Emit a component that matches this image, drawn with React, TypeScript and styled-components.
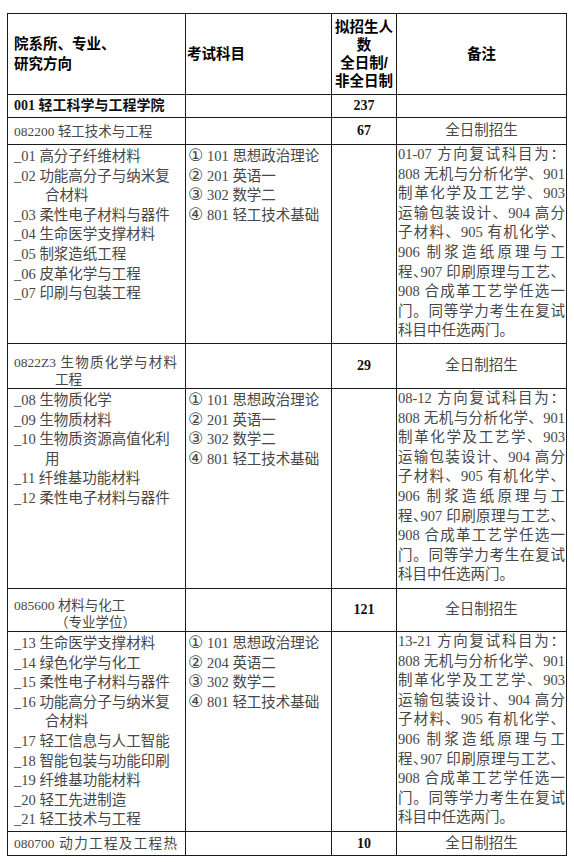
import React from 'react';
import styled, { createGlobalStyle } from 'styled-components';

const GlobalStyle = createGlobalStyle`
  html, body {
    margin: 0;
    padding: 0;
    background: #fff;
  }
  body {
    font-family: "Liberation Serif", "Noto Sans CJK SC", serif;
    color: #474747;
  }
`;

const Page = styled.div`
  padding: 13px 0 10px 7px;
`;

const Table = styled.table`
  border-collapse: collapse;
  table-layout: fixed;
  width: 559px;
`;

const Row = styled.tr<{ $h: number }>`
  height: ${p => p.$h}px;
`;

const HeadCell = styled.th<{ $align?: 'left' | 'center'; $pad?: number }>`
  border: 1px solid #1a1a1a;
  padding: 0 0 0 ${p => p.$pad ?? 0}px;
  font-family: "Liberation Sans", "Noto Sans CJK SC", sans-serif;
  font-weight: 700;
  font-size: 14.5px;
  line-height: 20px;
  color: #000;
  text-align: ${p => p.$align ?? 'center'};
  vertical-align: middle;
`;

const StackHead = styled.div`
  line-height: 18px;
`;

type Kind = 'dir' | 'subj' | 'num' | 'note';

const padLeft: Record<Kind, number> = { dir: 6, subj: 2, num: 0, note: 1 };

const Cell = styled.td<{ $kind: Kind; $top?: number }>`
  border: 1px solid #1a1a1a;
  padding: ${p => (p.$top !== undefined ? p.$top : 0)}px ${p => (p.$kind === 'note' ? 1 : 0)}px 0
    ${p => padLeft[p.$kind]}px;
  vertical-align: ${p => (p.$top !== undefined ? 'top' : 'middle')};
  text-align: ${p => (p.$kind === 'num' || p.$kind === 'note' ? 'center' : 'left')};
  font-size: 14.5px;
  line-height: 19.6px;
  overflow: hidden;
`;

const SchoolName = styled.div`
  font-weight: 700;
  font-size: 14px;
  color: #111;
`;

const Count = styled.div`
  font-weight: 700;
  font-size: 14px;
  color: #111;
`;

const CodeLine = styled.div<{ $indent?: number; $justify?: boolean }>`
  font-size: 13.5px;
  line-height: 17px;
  white-space: nowrap;
  padding-left: ${p => p.$indent ?? 0}px;
  text-align: ${p => (p.$justify ? 'justify' : 'left')};
  text-align-last: ${p => (p.$justify ? 'justify' : 'auto')};
  width: ${p => (p.$justify ? '163px' : 'auto')};
`;

const Line = styled.div<{ $indent?: number; $justify?: boolean }>`
  white-space: nowrap;
  padding-left: ${p => p.$indent ?? 0}px;
  text-align: ${p => (p.$justify ? 'justify' : 'left')};
  text-align-last: ${p => (p.$justify ? 'justify' : 'left')};
`;

const Circled = styled.span`
  display: inline-block;
  width: 15px;
  font-family: "DejaVu Sans", "Noto Sans CJK SC", sans-serif;
  font-size: 17px;
  line-height: 0;
  margin-right: 4px;
`;

const Tight = styled.span`
  letter-spacing: -0.5em;
`;

const Mode = styled.div`
  font-size: 14.5px;
`;

type Group = {
  code: string[];
  spread?: boolean;
  codeTop?: number;
  count: string;
  dirs: string[][];
  subjects: string[];
  first: string;
  h: number;
  codeH: number;
};

const groups: Group[] = [
  {
    code: ['082200 轻工技术与工程'],
    count: '67',
    codeH: 27,
    h: 199,
    dirs: [
      ['_01 高分子纤维材料'],
      ['_02 功能高分子与纳米复', '合材料'],
      ['_03 柔性电子材料与器件'],
      ['_04 生命医学支撑材料'],
      ['_05 制浆造纸工程'],
      ['_06 皮革化学与工程'],
      ['_07 印刷与包装工程'],
    ],
    subjects: ['101 思想政治理论', '201 英语一', '302 数学二', '801 轻工技术基础'],
    first: '01-07 方向复试科目为：',
  },
  {
    code: ['0822Z3 生物质化学与材料', '工程'],
    spread: true,
    codeTop: 10,
    count: '29',
    codeH: 44,
    h: 200,
    dirs: [
      ['_08 生物质化学'],
      ['_09 生物质材料'],
      ['_10 生物质资源高值化利', '用'],
      ['_11 纤维基功能材料'],
      ['_12 柔性电子材料与器件'],
    ],
    subjects: ['101 思想政治理论', '201 英语一', '302 数学二', '801 轻工技术基础'],
    first: '08-12 方向复试科目为：',
  },
  {
    code: ['085600 材料与化工', '（专业学位）'],
    codeTop: 8,
    count: '121',
    codeH: 41,
    h: 200,
    dirs: [
      ['_13 生命医学支撑材料'],
      ['_14 绿色化学与化工'],
      ['_15 柔性电子材料与器件'],
      ['_16 功能高分子与纳米复', '合材料'],
      ['_17 轻工信息与人工智能'],
      ['_18 智能包装与功能印刷'],
      ['_19 纤维基功能材料'],
      ['_20 轻工先进制造'],
      ['_21 轻工技术与工程'],
    ],
    subjects: ['101 思想政治理论', '204 英语二', '302 数学二', '801 轻工技术基础'],
    first: '13-21 方向复试科目为：',
  },
];

const marks = ['①', '②', '③', '④'];

const NoteLines: React.FC<{ first: string }> = ({ first }) => (
  <>
    <Line $justify>{first}</Line>
    <Line $justify>808 无机与分析化学、901</Line>
    <Line $justify>制革化学及工艺学、903</Line>
    <Line $justify>运输包装设计、904 高分</Line>
    <Line $justify>子材料、905 有机化学、</Line>
    <Line $justify>906 制浆造纸原理与工</Line>
    <Line $justify>
      程<Tight>、</Tight>907 印刷原理与工艺、
    </Line>
    <Line $justify>908 合成革工艺学任选一</Line>
    <Line $justify>门。同等学力考生在复试</Line>
    <Line>科目中任选两门。</Line>
  </>
);

const App: React.FC = () => {
  return (
    <Page>
      <GlobalStyle />
      <Table>
        <colgroup>
          <col style={{ width: 178 }} />
          <col style={{ width: 146 }} />
          <col style={{ width: 65 }} />
          <col style={{ width: 170 }} />
        </colgroup>
        <tbody>
          <Row $h={81}>
            <HeadCell $align="left" $pad={6}>
              院系所、专业、
              <br />
              研究方向
            </HeadCell>
            <HeadCell $align="left" $pad={1}>
              考试科目
            </HeadCell>
            <HeadCell>
              <StackHead>
                拟招生人
                <br />
                数
                <br />
                全日制/
                <br />
                非全日制
              </StackHead>
            </HeadCell>
            <HeadCell>备注</HeadCell>
          </Row>
          <Row $h={23}>
            <Cell $kind="dir">
              <SchoolName>001 轻工科学与工程学院</SchoolName>
            </Cell>
            <Cell $kind="subj" />
            <Cell $kind="num">
              <Count>237</Count>
            </Cell>
            <Cell $kind="note" />
          </Row>
          {groups.map(g => (
            <React.Fragment key={g.code[0]}>
              <Row $h={g.codeH}>
                <Cell $kind="dir" $top={g.codeTop}>
                  {g.code.map((c, i) => (
                    <CodeLine key={c} $indent={i > 0 ? 41 : 0} $justify={i === 0 && g.spread}>
                      {c}
                    </CodeLine>
                  ))}
                </Cell>
                <Cell $kind="subj" />
                <Cell $kind="num">
                  <Count>{g.count}</Count>
                </Cell>
                <Cell $kind="note">
                  <Mode>全日制招生</Mode>
                </Cell>
              </Row>
              <Row $h={g.h}>
                <Cell $kind="dir" $top={2}>
                  {g.dirs.map(d =>
                    d.map((l, i) => (
                      <Line key={l} $indent={i > 0 ? 31 : 0}>
                        {l}
                      </Line>
                    )),
                  )}
                </Cell>
                <Cell $kind="subj" $top={2}>
                  {g.subjects.map((s, i) => (
                    <Line key={s}>
                      <Circled>{marks[i]}</Circled>
                      {s}
                    </Line>
                  ))}
                </Cell>
                <Cell $kind="num" />
                <Cell $kind="note" $top={0}>
                  <NoteLines first={g.first} />
                </Cell>
              </Row>
            </React.Fragment>
          ))}
          <Row $h={24}>
            <Cell $kind="dir">
              <CodeLine $justify>080700 动力工程及工程热</CodeLine>
            </Cell>
            <Cell $kind="subj" />
            <Cell $kind="num">
              <Count>10</Count>
            </Cell>
            <Cell $kind="note">
              <Mode>全日制招生</Mode>
            </Cell>
          </Row>
        </tbody>
      </Table>
    </Page>
  );
};

export default App;
